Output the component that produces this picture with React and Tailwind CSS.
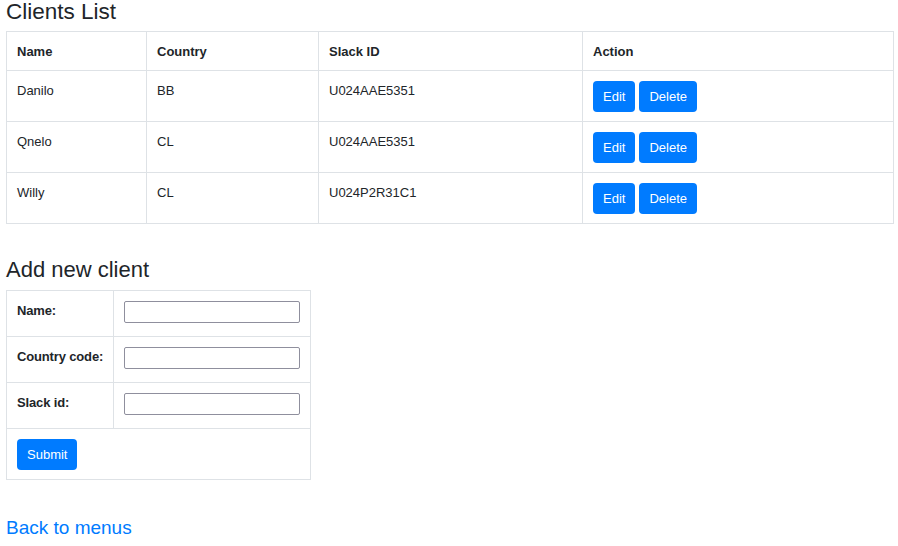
import React from 'react';

const clients = [
  { id: 1, name: 'Danilo', country: 'BB', slack: 'U024AAE5351' },
  { id: 2, name: 'Qnelo', country: 'CL', slack: 'U024AAE5351' },
  { id: 3, name: 'Willy', country: 'CL', slack: 'U024P2R31C1' },
];

const cell = 'border border-[#dee2e6] px-[10px] pt-[10px] pb-[9px] align-top text-left';
const btn = 'bg-[#007bff] text-white text-[13px] leading-[19px] px-[10px] py-[6px] rounded-[4px]';

const App = () => {
  return (
    <div className="px-[6px] text-[13px] leading-[19px] text-[#212529] bg-white min-h-[546px]" style={{ fontFamily: '"Liberation Sans", Arial, sans-serif' }}>
      <h2 className="text-[22.5px] leading-[24px] font-normal mb-[7px]">Clients List</h2>
      <table className="w-[888px] border-collapse">
        <thead>
          <tr>
            <th className={`${cell} font-bold w-[140px]`}>Name</th>
            <th className={`${cell} font-bold w-[172px]`}>Country</th>
            <th className={`${cell} font-bold w-[264px]`}>Slack ID</th>
            <th className={`${cell} font-bold`}>Action</th>
          </tr>
        </thead>
        <tbody>
          {clients.map(c => (
            <tr key={c.id}>
              <td className={cell}>{c.name}</td>
              <td className={cell}>{c.country}</td>
              <td className={cell}>{c.slack}</td>
              <td className={cell}>
                <div className="flex gap-[4px]">
                  <button className={btn}>Edit</button>
                  <button className={btn}>Delete</button>
                </div>
              </td>
            </tr>
          ))}
        </tbody>
      </table>

      <h2 className="text-[22px] leading-[24px] font-normal mt-[34px] mb-[8px]">Add new client</h2>
      <table className="border-collapse w-[302px]">
        <tbody>
          {['Name:', 'Country code:', 'Slack id:'].map(label => (
            <tr key={label}>
              <td className={`${cell} font-bold w-[105px] whitespace-nowrap tracking-[-0.15px]`}>{label}</td>
              <td className="border border-[#dee2e6] px-[10px] pt-[10px] pb-[13px] align-top">
                <input type="text" className="block w-[176px] h-[22px] border border-[#8f8f9d] rounded-[2px] bg-white" />
              </td>
            </tr>
          ))}
          <tr>
            <td colSpan={2} className={cell}>
              <button className={btn}>Submit</button>
            </td>
          </tr>
        </tbody>
      </table>

      <div className="mt-[36px]">
        <a href="#" className="text-[19px] leading-[24px] text-[#007bff]">Back to menus</a>
      </div>
    </div>
  );
};

export default App;
